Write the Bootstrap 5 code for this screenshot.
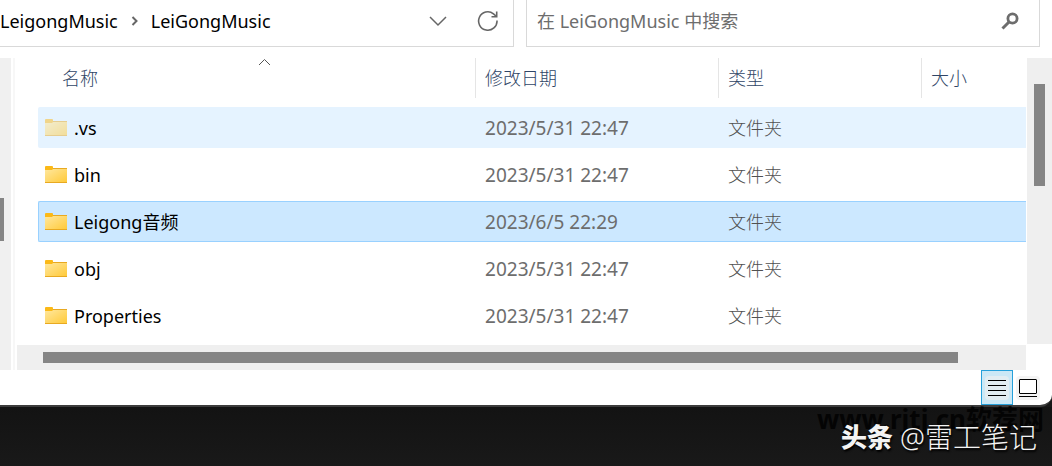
<!DOCTYPE html>
<html lang="zh-CN">
<head>
<meta charset="utf-8">
<meta name="viewport" content="width=device-width, initial-scale=1">
<title>LeiGongMusic</title>
<link href="https://cdn.jsdelivr.net/npm/bootstrap@5.3.0/dist/css/bootstrap.min.css" rel="stylesheet">
<style>
  body { background: #181818; color: #000; font-family: "Noto Sans", "Noto Sans CJK SC", sans-serif; font-size: 18px; line-height: 24px; font-weight: 400; }
  .explorer { background: #fff; border-bottom: 2px solid #3c3c3c; border-bottom-right-radius: 12px; }
  .toolbar { height: 47px; gap: 12px; padding-right: 12px; }
  .address, .search { border: 1px solid #d9d9d9; border-top: 0; }
  .address { border-left: 0; padding: 0 14px 5px 0; }
  .address a { color: #000; text-decoration: none; }
  .crumb-arrow { margin: 0 12px 0 13px; }
  .refresh { margin-left: 30px; }
  .search { width: 514px; padding: 0 20px 5px 10px; }
  .search input { border: 0; outline: 0; background: none; min-width: 0; padding: 0; color: #6d6d6d; }
  .search input::placeholder { color: #6d6d6d; opacity: 1; }
  .plain-btn { border: 0; background: none; padding: 0; display: flex; }
  .panes { margin-top: 11px; height: 312px; }
  .rail { width: 11px; background: #f0f0f0; padding-top: 140px; }
  .rail-thumb { width: 4px; height: 43px; background: #858585; }
  .splitter { width: 2px; margin: 0 2px; background: #f7f7f7; }
  .file-pane { min-width: 0; }
  .files { padding-left: 21px; height: 287px; overflow: hidden; }
  .files table { width: 100%; table-layout: fixed; border-collapse: separate; border-spacing: 0 6px; margin-top: -6px; }
  .col-date { width: 243px; }
  .col-type { width: 203px; }
  .col-size { width: 105px; }
  .files th { height: 43px; padding: 0 0 3px 0; font-weight: 300; color: #2f4566; }
  .files th > div { height: 40px; padding-left: 9px; border-left: 1px solid #e5e5e5; display: flex; align-items: center; }
  .files th.col-name > div { padding-left: 24px; border: 0; position: relative; }
  .sort-mark { position: absolute; top: 0; left: 220px; }
  .files td { height: 41px; padding: 0 0 0 10px; color: #6d6d6d; border: 0 solid #99d1ff; white-space: nowrap; }
  .files td.file-name { color: #000; padding-left: 7px; }
  .files td.file-name > div { gap: 7px; }
  .files td.file-date { font-size: 19px; }
  .files td.file-type { font-weight: 300; color: #505050; }
  .hovered td { background: #e5f3ff; }
  .selected td { background: #cce8ff; }
  .files .selected td { border-width: 1px 0; }
  .files .selected td:first-child { border-left-width: 1px; padding-left: 6px; }
  .hovered td:first-child, .selected td:first-child { border-radius: 2px 0 0 2px; }
  .hbar { height: 25px; background: #efefef; padding: 7px 68px 7px 26px; }
  .hbar-thumb { height: 11px; background: #858585; }
  .vbar { width: 25px; height: 286px; margin-left: 1px; background: #efefef; padding: 26px 7px 0; }
  .vbar-thumb { height: 102px; background: #858585; }
  .statusbar { height: 35px; padding-right: 9px; }
  .view-btn { width: 30px; border: 1px solid transparent; background: none; padding: 0; display: flex; align-items: center; justify-content: center; }
  .view-btn.current { width: 32px; border-color: #26a0da; background: #cbe8f6; }
  .desktop { height: 59px; background: linear-gradient(#131313, #191919); position: relative; }
  .site-mark { position: absolute; right: 8px; top: -2px; color: #040404; font-weight: 700; font-size: 26px; line-height: 28px; white-space: nowrap; }
  .credit { position: relative; padding: 14px 15px 0 0; gap: 7px; color: #f4f4f4; font-size: 28px; line-height: 32px; font-weight: 300; text-shadow: 1px 2px 2px #000; }
  .credit strong { font-weight: 900; font-size: 26px; }
</style>
</head>
<body>
<main class="explorer">
  <div class="toolbar d-flex">
    <nav class="address d-flex align-items-center flex-grow-1" aria-label="路径">
      <a href="#">LeigongMusic</a>
      <svg class="crumb-arrow" width="8" height="10" viewBox="0 0 8 10" fill="none" stroke="#666" stroke-width="2"><path d="M1.500 1l4 4-4 4"/></svg>
      <a href="#">LeiGongMusic</a>
      <button class="plain-btn ms-auto" aria-label="历史记录"><svg width="18" height="12" viewBox="0 0 18 12" fill="none" stroke="#666" stroke-width="1.500"><path d="M1 2l8 8 8-8"/></svg></button>
      <button class="plain-btn refresh" aria-label="刷新"><svg width="22" height="22" viewBox="0 0 22 22" fill="none" stroke="#666" stroke-width="1.600"><path d="M20 10.500A9.200 9.200 0 1 1 16.500 3.800L19.500 6.500M19.700 1.500V6.700H14.500"/></svg></button>
    </nav>
    <form class="search d-flex align-items-center" role="search">
      <input class="flex-grow-1" type="search" placeholder="在 LeiGongMusic 中搜索" aria-label="搜索">
      <button class="plain-btn" type="button" aria-label="开始搜索"><svg width="18" height="18" viewBox="0 0 18 18" fill="none" stroke="#6d6d6d"><circle cx="11.500" cy="6.500" r="4.600" stroke-width="2.800"/><path d="M8 10L1.500 16.500" stroke-width="3"/></svg></button>
    </form>
  </div>

  <div class="panes d-flex">
    <div class="rail flex-shrink-0"><div class="rail-thumb"></div></div>
    <div class="splitter flex-shrink-0"></div>
    <div class="file-pane flex-grow-1">
      <div class="files">
        <table>
          <colgroup><col><col class="col-date"><col class="col-type"><col class="col-size"></colgroup>
          <thead>
            <tr>
              <th class="col-name" scope="col"><div>名称<svg class="sort-mark" width="13" height="8" viewBox="0 0 13 8" fill="none" stroke="#555"><path d="M1 7l5.500-5.500L12 7"/></svg></div></th>
              <th scope="col"><div>修改日期</div></th>
              <th scope="col"><div>类型</div></th>
              <th scope="col"><div>大小</div></th>
            </tr>
          </thead>
          <tbody id="rows"></tbody>
        </table>
      </div>
      <div class="hbar"><div class="hbar-thumb"></div></div>
    </div>
    <div class="vbar flex-shrink-0"><div class="vbar-thumb"></div></div>
  </div>

  <div class="statusbar d-flex justify-content-end">
    <button class="view-btn current" aria-label="详细信息"><svg width="24" height="24" viewBox="0 0 24 24"><rect width="24" height="24" rx="4" fill="#e2edf2"/><path d="M3 4.500h18M3 9.500h18M3 14.500h18M3 19.500h18" stroke="#000"/></svg></button>
    <button class="view-btn" aria-label="大缩略图"><svg width="24" height="24" viewBox="0 0 24 24"><rect width="24" height="24" rx="4" fill="#f4f4f4"/><rect x="3.500" y="3.500" width="17" height="14" rx=".5" fill="#fff" stroke="#000"/><path d="M3 20.500h18" stroke="#000"/></svg></button>
  </div>
</main>

<footer class="desktop">
  <div class="site-mark">www.rjtj.cn软荐网</div>
  <div class="credit d-flex justify-content-end"><strong>头条</strong><span>@雷工笔记</span></div>
</footer>

<svg width="0" height="0" class="position-absolute" aria-hidden="true">
  <linearGradient id="gold" x1="0" y1="0" x2="1" y2="1"><stop offset="0" stop-color="#ffe8a0"/><stop offset="1" stop-color="#ffca3a"/></linearGradient>
  <symbol id="folder" viewBox="0 0 22 17"><path d="M0 1Q0 0 1 0H7Q8 0 8 1V4H0z" fill="#fbb917"/><path d="M0 4H7L8.500 2.500H22V16H0z" fill="url(#gold)"/><path d="M0 16.500H22M8 2.500H22" stroke="#e8a921"/></symbol>
</svg>

<script>
  const files = [
    { name: ".vs", date: "2023/5/31 22:47", state: "hovered", faded: true },
    { name: "bin", date: "2023/5/31 22:47" },
    { name: "Leigong音频", date: "2023/6/5 22:29", state: "selected" },
    { name: "obj", date: "2023/5/31 22:47" },
    { name: "Properties", date: "2023/5/31 22:47" }
  ];
  document.getElementById("rows").innerHTML = files.map(f => `
    <tr class="${f.state || ""}">
      <td class="file-name"><div class="d-flex align-items-center"><svg class="${f.faded ? "opacity-50" : ""}" width="22" height="17"><use href="#folder"/></svg><span>${f.name}</span></div></td>
      <td class="file-date">${f.date}</td>
      <td class="file-type">文件夹</td>
      <td></td>
    </tr>`).join("");
</script>
<script src="https://cdn.jsdelivr.net/npm/bootstrap@5.3.0/dist/js/bootstrap.bundle.min.js"></script>
</body>
</html>
